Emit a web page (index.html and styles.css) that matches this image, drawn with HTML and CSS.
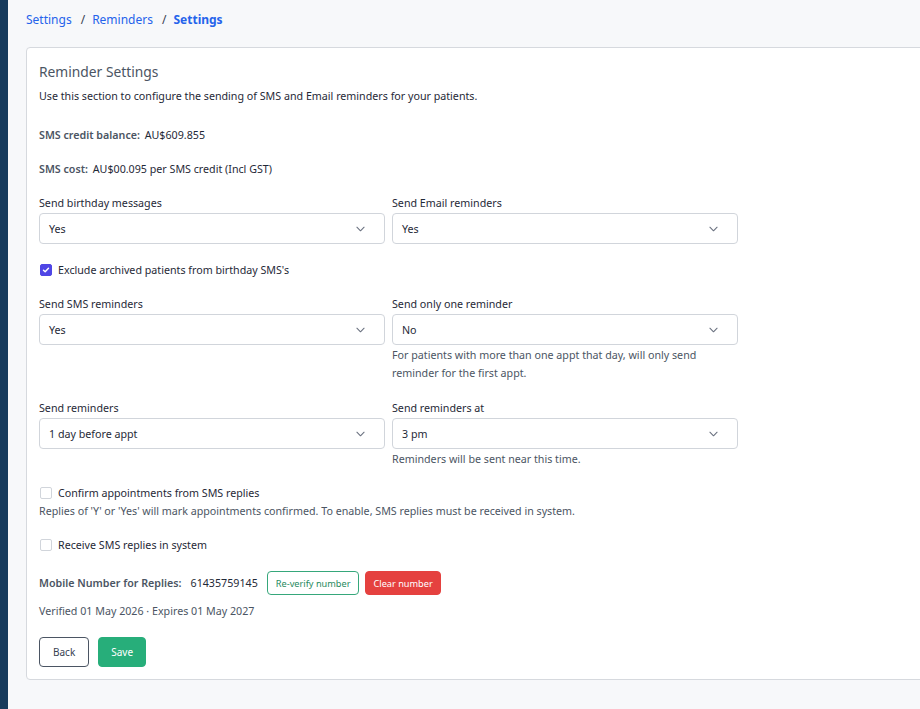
FILE: index.html
```html
<!DOCTYPE html>
<html lang="en">
<head>
<meta charset="utf-8">
<title>Reminder Settings</title>
<link rel="stylesheet" href="styles.css">
</head>
<body>
<div class="shell">
  <aside class="rail"></aside>
  <main class="main">
    <nav class="crumbs">
      <a href="#">Settings</a>
      <span class="sep">/</span>
      <a href="#">Reminders</a>
      <span class="sep">/</span>
      <a href="#" class="current">Settings</a>
    </nav>

    <section class="card">
      <h1 class="card-title">Reminder Settings</h1>
      <p class="intro">Use this section to configure the sending of SMS and Email reminders for your patients.</p>

      <p class="stat"><span class="stat-label">SMS credit balance:</span> AU$609.855</p>
      <p class="stat"><span class="stat-label">SMS cost:</span> AU$00.095 per SMS credit (Incl GST)</p>

      <div class="grid grid-first">
        <div class="field">
          <label class="label">Send birthday messages</label>
          <div class="select"><span>Yes</span><svg class="chev" viewBox="0 0 10 6"><path d="M1 1l4 4 4-4"/></svg></div>
        </div>
        <div class="field">
          <label class="label">Send Email reminders</label>
          <div class="select"><span>Yes</span><svg class="chev" viewBox="0 0 10 6"><path d="M1 1l4 4 4-4"/></svg></div>
        </div>
      </div>

      <label class="check check-top">
        <span class="box on"><svg viewBox="0 0 12 12"><path d="M3 6.2l2 2 4-4.4"/></svg></span>
        Exclude archived patients from birthday SMS's
      </label>

      <div class="grid grid-sms">
        <div class="field">
          <label class="label">Send SMS reminders</label>
          <div class="select"><span>Yes</span><svg class="chev" viewBox="0 0 10 6"><path d="M1 1l4 4 4-4"/></svg></div>
        </div>
        <div class="field">
          <label class="label">Send only one reminder</label>
          <div class="select"><span>No</span><svg class="chev" viewBox="0 0 10 6"><path d="M1 1l4 4 4-4"/></svg></div>
          <p class="help">For patients with more than one appt that day, will only send reminder for the first appt.</p>
        </div>
      </div>

      <div class="grid grid-when">
        <div class="field">
          <label class="label">Send reminders</label>
          <div class="select"><span>1 day before appt</span><svg class="chev" viewBox="0 0 10 6"><path d="M1 1l4 4 4-4"/></svg></div>
        </div>
        <div class="field">
          <label class="label">Send reminders at</label>
          <div class="select"><span>3 pm</span><svg class="chev" viewBox="0 0 10 6"><path d="M1 1l4 4 4-4"/></svg></div>
          <p class="help">Reminders will be sent near this time.</p>
        </div>
      </div>

      <label class="check check-confirm">
        <span class="box"></span>
        Confirm appointments from SMS replies
      </label>
      <p class="help help-row">Replies of 'Y' or 'Yes' will mark appointments confirmed. To enable, SMS replies must be received in system.</p>

      <label class="check check-receive">
        <span class="box"></span>
        Receive SMS replies in system
      </label>

      <div class="mobile">
        <span class="stat-label">Mobile Number for Replies:</span>
        <span class="number">61435759145</span>
        <button class="btn-sm outline-green">Re-verify number</button>
        <button class="btn-sm red">Clear number</button>
      </div>
      <p class="verified">Verified 01 May 2026 · Expires 01 May 2027</p>

      <div class="actions">
        <button class="btn back">Back</button>
        <button class="btn save">Save</button>
      </div>
    </section>
  </main>
</div>
</body>
</html>
```

FILE: styles.css
```css
* { box-sizing: border-box; }

html, body {
  margin: 0;
  height: 100%;
}

body {
  font-family: "Noto Sans", "Open Sans", sans-serif;
  font-size: 10.7px;
  color: #1f2937;
  background: #f7f8fa;
}

.shell {
  display: flex;
  min-height: 100%;
}

.rail {
  width: 8px;
  flex: none;
  background: #173b5c;
}

.main {
  flex: 1;
  min-width: 0;
  padding: 11px 0 0 18px;
}

/* breadcrumb trail */
.crumbs {
  display: flex;
  align-items: center;
  gap: 7px;
  font-size: 12px;
  line-height: 18px;
  height: 18px;
}

.crumbs a {
  color: #2563eb;
  text-decoration: none;
}

.crumbs a.current { font-weight: 700; }

.crumbs .sep { color: #374151; margin-left: 2px; }

/* settings card */
.card {
  margin-top: 18px;
  width: 920px;
  background: #fff;
  border: 1px solid #d6d9de;
  border-radius: 4px;
  padding: 13px 12px 12px 12px;
}

.card-title {
  margin: 0;
  font-size: 13.8px;
  font-weight: 400;
  color: #4b5563;
  line-height: 22px;
}

.intro {
  margin: 4px 0 0;
  line-height: 18px;
}

.stat {
  margin: 21px 0 0;
  line-height: 18px;
}

.stat + .stat { margin-top: 16px; }

.stat-label {
  font-weight: 600;
  color: #4b5563;
  margin-right: 2px;
}

/* two-column form rows */
.grid {
  display: grid;
  grid-template-columns: 346px 346px;
  column-gap: 7px;
}

.grid-first { margin-top: 16px; }
.grid-sms { margin-top: 16px; }
.grid-when { margin-top: 17px; }

.label {
  display: block;
  line-height: 18px;
  margin-bottom: 1px;
}

.select {
  height: 31px;
  border: 1px solid #d1d5db;
  border-radius: 4px;
  display: flex;
  align-items: center;
  justify-content: space-between;
  padding: 0 19px 0 9px;
  background: #fff;
}

.chev {
  width: 9px;
  height: 6px;
  fill: none;
  stroke: #6b7280;
  stroke-width: 1.2;
  stroke-linecap: round;
  stroke-linejoin: round;
}

.help {
  margin: 1px 0 0;
  line-height: 18px;
  color: #4b5563;
}

/* checkboxes */
.check {
  display: flex;
  align-items: center;
  gap: 6px;
  line-height: 18px;
}

.check-top { margin-top: 17px; }
.check-confirm { margin-top: 16px; }
.check-receive { margin-top: 16px; }

.box {
  width: 12px;
  height: 12px;
  border: 1px solid #d1d5db;
  border-radius: 2px;
  margin-left: 1px;
  display: inline-flex;
  align-items: center;
  justify-content: center;
  background: #fff;
}

.box.on {
  background: #4f46e5;
  border-color: #4f46e5;
}

.box svg {
  width: 10px;
  height: 10px;
  fill: none;
  stroke: #fff;
  stroke-width: 1.7;
  stroke-linecap: round;
  stroke-linejoin: round;
}

.help-row { margin-top: 0; }

/* reply number row */
.mobile {
  display: flex;
  align-items: center;
  margin-top: 17px;
  height: 24px;
}

.mobile .stat-label { margin-right: 9px; }

.number { margin-right: 9px; }

.btn-sm {
  font-family: inherit;
  font-size: 9.2px;
  height: 24px;
  padding: 0 8px;
  border-radius: 4px;
  cursor: pointer;
}

.outline-green {
  background: #fff;
  border: 1px solid #36a77b;
  color: #1f8a5e;
  margin-right: 6px;
}

.red {
  background: #e5413f;
  border: 1px solid #e5413f;
  color: #fff;
  padding: 0 7px;
}

.verified {
  margin: 7px 0 0;
  line-height: 18px;
  color: #4b5563;
}

/* footer actions */
.actions {
  display: flex;
  gap: 9px;
  margin-top: 17px;
}

.btn {
  font-family: inherit;
  font-size: 10px;
  height: 30px;
  border-radius: 4px;
  padding: 0 12px;
  cursor: pointer;
}

.back {
  background: #fff;
  border: 1px solid #4b5563;
  color: #374151;
  padding: 0 13px;
}

.save {
  background: #27ae7a;
  border: 1px solid #27ae7a;
  color: #fff;
}
```
